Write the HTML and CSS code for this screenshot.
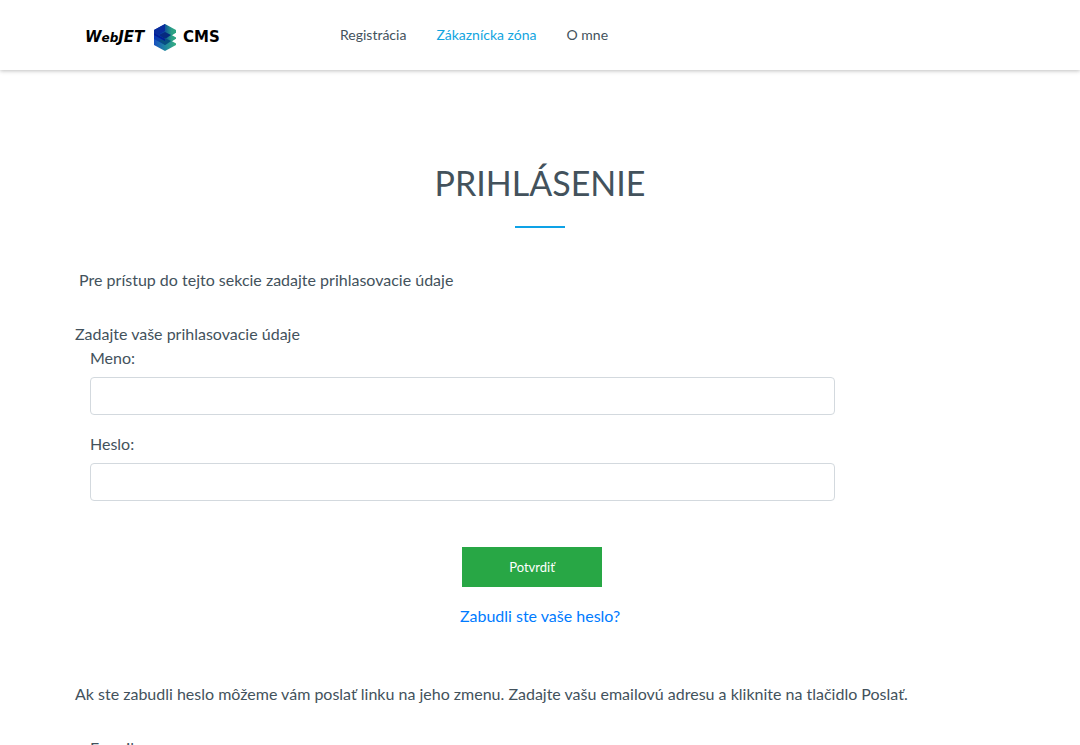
FILE: index.html
```html
<!DOCTYPE html>
<html lang="sk">
<head>
<meta charset="utf-8">
<meta name="viewport" content="width=device-width, initial-scale=1">
<title>Prihlásenie</title>
<link rel="stylesheet" href="styles.css">
</head>
<body>
<header class="header">
  <div class="container header-inner">
    <a class="logo" href="#">
      <span class="logo-text">W<span class="logo-small">eb</span>JET</span>
      <svg class="logo-mark" viewBox="0 0 24 28" aria-hidden="true">
        <defs>
          <linearGradient id="top" x1="0" y1="0" x2="1" y2="0">
            <stop offset="0" stop-color="#0a35b4"/>
            <stop offset="0.45" stop-color="#0c4a9c"/>
            <stop offset="0.8" stop-color="#2a9f86"/>
            <stop offset="1" stop-color="#2fa680"/>
          </linearGradient>
          <linearGradient id="bottom" x1="0" y1="0" x2="1" y2="0">
            <stop offset="0" stop-color="#1a4fc0"/>
            <stop offset="0.5" stop-color="#1f86a0"/>
            <stop offset="1" stop-color="#38b080"/>
          </linearGradient>
        </defs>
        <path d="M1 14H15L23 19v3L12 28 1 22Z" fill="url(#bottom)"/>
        <path d="M1 8H15L23 13v3L12 22 1 16Z" fill="url(#top)"/>
        <path d="M1 7 12 1 23 7v3L12 16 1 10Z" fill="url(#top)"/>
        <path d="M6 12 12 9l6 3-6 4Z" fill="#06297f"/>
        <path d="M6 18 12 15l6 3-6 4Z" fill="#085080"/>
        <path d="M1 7 12 1v7l-7 4-4-2Z" fill="#0a2c9c"/>
        <path d="M1 10 12 16v2L1 12Z" fill="#021c98"/>
        <path d="M19 12.2 24 9.5v5.4Z" fill="#fff"/>
        <path d="M19 18.2 24 15.5v5.4Z" fill="#fff"/>
      </svg>
      <span class="logo-text logo-cms">CMS</span>
    </a>
    <nav class="nav">
      <a class="nav-link" href="#">Registrácia</a>
      <a class="nav-link active" href="#">Zákaznícka zóna</a>
      <a class="nav-link" href="#">O mne</a>
    </nav>
  </div>
</header>
<main class="container">
  <h1 class="title">PRIHLÁSENIE</h1>
  <p class="intro">&nbsp;Pre prístup do tejto sekcie zadajte prihlasovacie údaje</p>
  <form class="form">
    <p class="lead">Zadajte vaše prihlasovacie údaje</p>
    <div class="group">
      <label class="label" for="login">Meno:</label>
      <input class="field" id="login" type="text">
    </div>
    <div class="group">
      <label class="label" for="password">Heslo:</label>
      <input class="field" id="password" type="password">
    </div>
    <div class="actions">
      <button class="submit" type="submit">Potvrdiť</button>
    </div>
  </form>
  <p class="forgot"><a class="forgot-link" href="#">Zabudli ste vaše heslo?</a></p>
  <form class="form">
    <p class="help">Ak ste zabudli heslo môžeme vám poslať linku na jeho zmenu. Zadajte vašu emailovú adresu a kliknite na tlačidlo Poslať.</p>
    <div class="group">
      <label class="label" for="email">E-mail:</label>
      <input class="field" id="email" type="email">
    </div>
  </form>
</main>
</body>
</html>
```

FILE: styles.css
```css
*, *::before, *::after { box-sizing: border-box; }

body {
  margin: 0;
  background: #fff;
  color: #43525c;
  font-family: Lato, "Open Sans", sans-serif;
  font-size: 16px;
  line-height: 24px;
}

p { margin: 0; }
a { text-decoration: none; }

.container {
  max-width: 960px;
  margin: 0 auto;
  padding: 0 15px;
}

.header {
  background: #fff;
  box-shadow: 0 1px 4px rgba(0, 0, 0, 0.25);
}

.header-inner {
  display: flex;
  height: 70px;
  align-items: center;
}

.logo {
  display: flex;
  align-items: center;
  width: 250px;
  padding: 4px 0 0 10px;
  gap: 6px;
  color: #000;
}

.logo-text {
  width: 62px;
  font: italic bold 15px/24px "DejaVu Sans", sans-serif;
  white-space: nowrap;
}

.logo-small { font-size: 12px; }
.logo-cms { width: auto; font-style: normal; }

.logo-mark {
  width: 24px;
  height: 28px;
}

.nav {
  display: flex;
  gap: 30px;
  margin-left: 15px;
  font-size: 14px;
}

.nav-link { color: #43525c; }
.nav-link.active { color: #12a5df; }

.title {
  margin: 83px 0 40px;
  font-size: 34px;
  font-weight: 400;
  line-height: 60px;
  text-align: center;
}

.title::after {
  display: block;
  width: 50px;
  height: 2px;
  margin: 13px auto 0;
  background: #0ea2e6;
  content: "";
}

.intro { margin-bottom: 30px; }

.group {
  width: 83.3333%;
  margin-bottom: 17px;
  padding: 0 15px;
}

.label {
  display: block;
  margin-bottom: 7px;
}

.field {
  display: block;
  width: 100%;
  height: 38px;
  padding: 6px 12px;
  border: 1px solid #d3d9de;
  border-radius: 4px;
  background: #fff;
  color: inherit;
  font: inherit;
}

.actions {
  margin-right: 16px;
  padding-top: 29px;
  text-align: center;
}

.submit {
  display: block;
  width: 140px;
  height: 40px;
  margin: 0 auto;
  border: 0;
  background: #28a745;
  color: #fff;
  font-family: inherit;
  font-size: 13px;
}

.forgot {
  margin: 17px 0 54px;
  text-align: center;
}

.forgot-link { color: #007bff; }
.help { margin-bottom: 30px; }
```
